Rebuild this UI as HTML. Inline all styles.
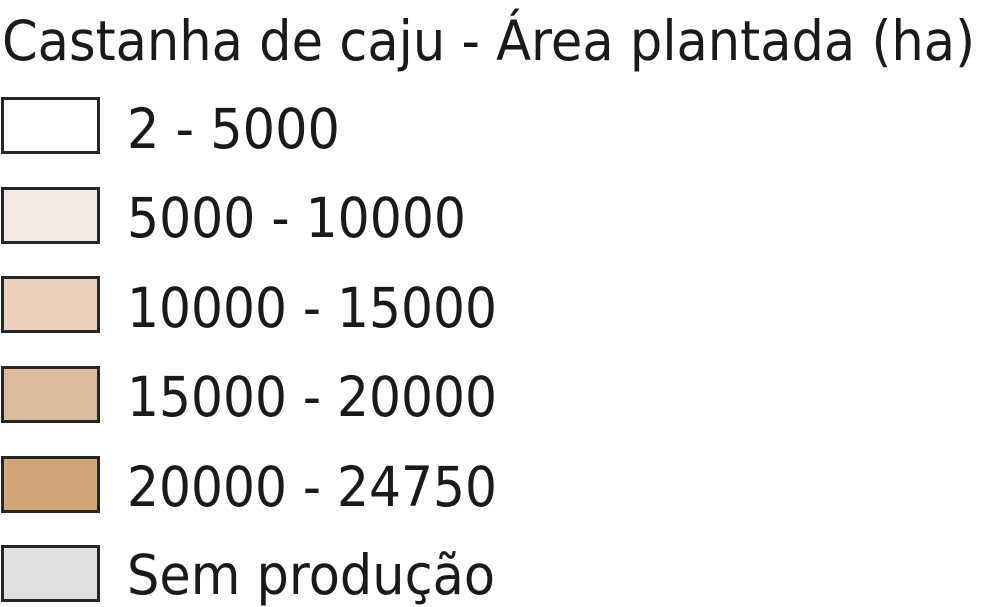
<!DOCTYPE html>
<html><head><style>html,body{margin:0;padding:0;background:#fff;}svg{display:block}</style></head>
<body>
<svg width="985" height="607" xmlns="http://www.w3.org/2000/svg" font-family="DejaVu Sans, Liberation Sans, sans-serif" font-size="55" fill="#1a1a1a">
<text x="2" y="60" textLength="973" lengthAdjust="spacingAndGlyphs">Castanha de caju - Área plantada (ha)</text>
<g stroke="#262626" stroke-width="3">
<rect x="2.5" y="98.5" width="96" height="54" fill="#ffffff"/>
<rect x="2.5" y="188.5" width="96" height="54" fill="#f3e9e0"/>
<rect x="2.5" y="277.5" width="96" height="54" fill="#e9d1bb"/>
<rect x="2.5" y="367.5" width="96" height="54" fill="#dcbb9b"/>
<rect x="2.5" y="457.5" width="96" height="54" fill="#d1a679"/>
<rect x="2.5" y="546.5" width="96" height="54" fill="#dfdfdf"/>
</g>
<text x="127" y="148" textLength="213" lengthAdjust="spacingAndGlyphs">2 - 5000</text>
<text x="127" y="237" textLength="339" lengthAdjust="spacingAndGlyphs">5000 - 10000</text>
<text x="127" y="327" textLength="370" lengthAdjust="spacingAndGlyphs">10000 - 15000</text>
<text x="127" y="416" textLength="370" lengthAdjust="spacingAndGlyphs">15000 - 20000</text>
<text x="127" y="506" textLength="370" lengthAdjust="spacingAndGlyphs">20000 - 24750</text>
<text x="127" y="594" textLength="368" lengthAdjust="spacingAndGlyphs">Sem produção</text>
</svg>
</body></html>
